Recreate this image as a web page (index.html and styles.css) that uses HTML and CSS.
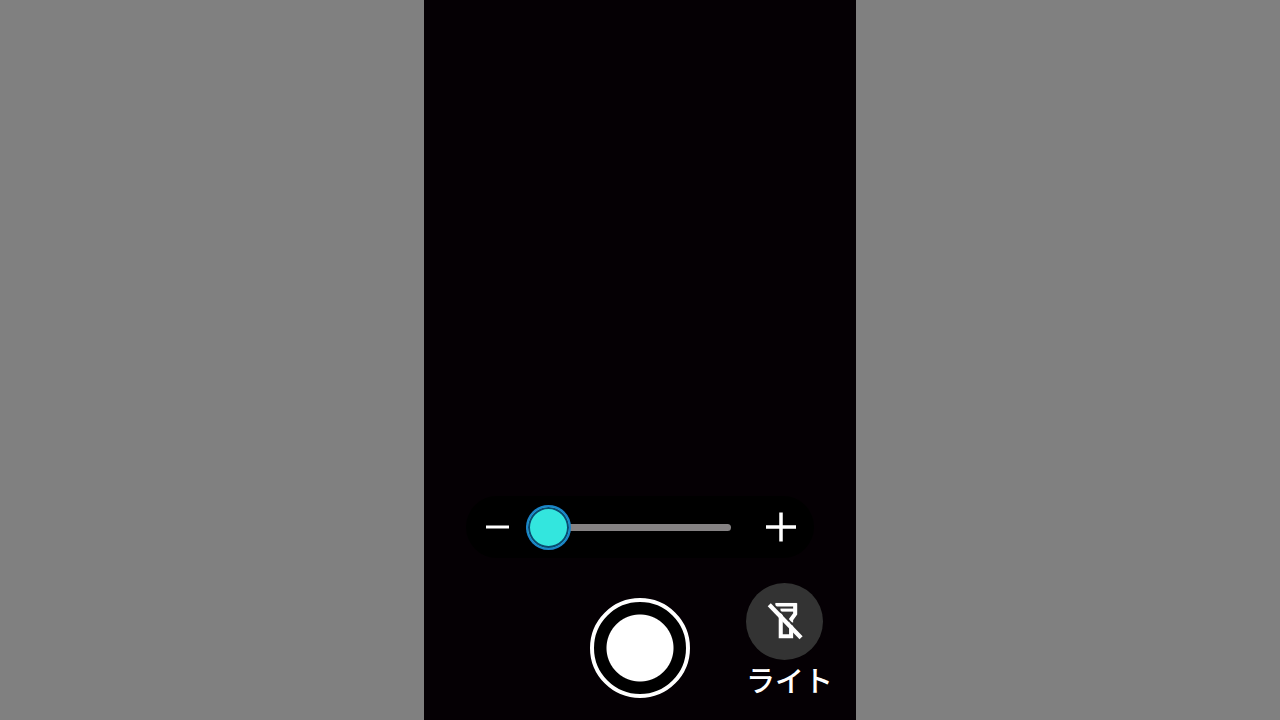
FILE: index.html
```html
<!DOCTYPE html>
<html lang="ja">
<head>
    <meta charset="UTF-8">
    <meta name="viewport" content="width=device-width, initial-scale=1.0">
    <title>カメラ</title>
    <link rel="stylesheet" href="styles.css">
</head>
<body>
    <main class="camera">
        <div class="zoom">
            <button type="button" class="zoom-btn" aria-label="縮小">
                <svg viewBox="0 0 30 30"><path d="M2 15H25" stroke="#fff" stroke-width="3"/></svg>
            </button>
            <input type="range" class="zoom-slider" min="0" max="100" value="0" aria-label="ズーム">
            <button type="button" class="zoom-btn" aria-label="拡大">
                <svg viewBox="0 0 30 30"><path d="M0 15H30M15 0.5V29.5" stroke="#fff" stroke-width="3.5"/></svg>
            </button>
        </div>

        <div class="controls">
            <button type="button" class="shutter" aria-label="撮影"></button>
            <button type="button" class="light">
                <span class="light-icon">
                    <svg viewBox="0 0 60 60">
                        <g fill="none" stroke="#fff" stroke-width="4">
                            <path d="M21 13.5H42" stroke-width="3.5"/>
                            <path d="M26 18.8H41" stroke-width="3"/>
                            <path d="M40.5 12V22.5L36.5 28V31"/>
                            <path d="M26.3 22V44.5H36.5V34"/>
                        </g>
                        <path d="M19 13L49 44" stroke="#303030" stroke-width="1.5"/>
                        <path d="M15 13.5L46.3 46" stroke="#fff" stroke-width="4.2"/>
                    </svg>
                </span>
                <span class="light-label">ライト</span>
            </button>
        </div>
    </main>
</body>
</html>
```
FILE: styles.css
```css
body {
    margin: 0;
    background-color: #808080;
    font-family: "Noto Sans CJK JP", sans-serif;
}
button {
    padding: 0;
    border: none;
    background: none;
    color: #fff;
    font-family: inherit;
    cursor: pointer;
}
svg {
    display: block;
    width: 100%;
}
.camera {
    box-sizing: border-box;
    height: 100vh;
    aspect-ratio: 3 / 5;
    margin: 0 auto;
    padding-bottom: 22px;
    background-color: #050004;
    display: flex;
    flex-direction: column;
    justify-content: flex-end;
    gap: 25px;
}
.zoom {
    display: flex;
    align-items: center;
    gap: 12px;
    margin: 0 42px;
    padding: 8px 18px;
    border-radius: 31px;
    background-color: #000;
}
.zoom-btn {
    flex: none;
    width: 30px;
}
.zoom-slider {
    appearance: none;
    flex: 1;
    min-width: 0;
    height: 46px;
    margin: 0 23px 0 0;
    background: none;
}
.zoom-slider::-webkit-slider-runnable-track {
    height: 7px;
    border-radius: 4px;
    background-color: #858283;
}
.zoom-slider::-webkit-slider-thumb {
    appearance: none;
    box-sizing: border-box;
    width: 45px;
    height: 45px;
    margin-top: -19px;
    border: 2px solid #1b84c8;
    border-radius: 50%;
    background-color: #33e6de;
    box-shadow: inset 0 0 0 2px #0a4a70;
}
.controls {
    display: grid;
    grid-template-columns: 1fr 100px 1fr;
    align-items: end;
}
.shutter {
    grid-column: 2;
    height: 100px;
    border: 4px solid #fff;
    border-radius: 50%;
    background: radial-gradient(circle, #fff 33px, #000 34px);
}
.light {
    justify-self: end;
    margin-right: 23px;
    display: flex;
    flex-direction: column;
    align-items: flex-start;
}
.light-icon {
    box-sizing: border-box;
    width: 77px;
    height: 77px;
    padding: 8px;
    border-radius: 50%;
    background-color: #333;
}
.light-label {
    font-size: 29px;
    font-weight: 500;
    line-height: 38px;
}
```
